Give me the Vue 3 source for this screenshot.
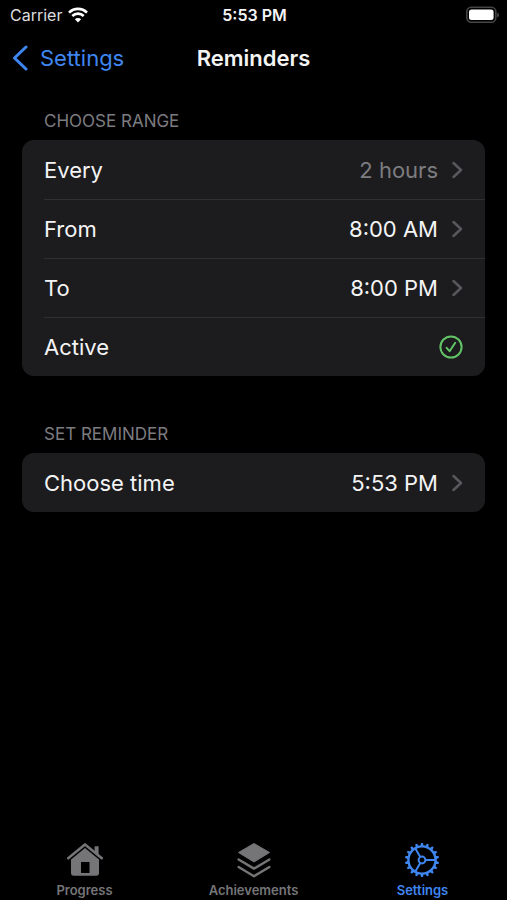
<script setup>
import { ref } from 'vue'

const active = ref(true)
const currentTab = ref('settings')

const range = ref([
  { key: 'every', label: 'Every', value: '2 hours', muted: true },
  { key: 'from', label: 'From', value: '8:00 AM' },
  { key: 'to', label: 'To', value: '8:00 PM' },
])

const tabs = [
  { key: 'progress', label: 'Progress' },
  { key: 'achievements', label: 'Achievements' },
  { key: 'settings', label: 'Settings' },
]

// angles of the teeth around the settings gear
const teeth = Array.from({ length: 18 }, (_, i) => i * 20 + 10)
</script>

<template>
  <div class="screen">
    <div class="status">
      <div class="carrier">
        <span>Carrier</span>
        <svg width="20" height="16" viewBox="0 0 20 16" fill="none" stroke="#fff" stroke-width="2.6">
          <path d="M1 5.6a12.7 12.7 0 0 1 18 0" />
          <path d="M4.3 9a8.1 8.1 0 0 1 11.4 0" />
          <path d="M10 15.4l-3.1-3.2a4.4 4.4 0 0 1 6.2 0z" fill="#fff" stroke="none" />
        </svg>
      </div>
      <span class="clock">5:53 PM</span>
      <svg class="battery" width="34" height="18" viewBox="0 0 34 18">
        <rect x="1.8" y="1.3" width="29" height="15" rx="4.5" fill="none" stroke="#454547" stroke-width="1.6" />
        <rect x="4" y="3.5" width="24.6" height="10.6" rx="2.5" fill="#fff" />
        <path d="M32.2 6.5q1.8.8 1.8 2.5t-1.8 2.5z" fill="#4b4b4d" />
      </svg>
    </div>

    <header class="navbar">
      <a class="back" href="#settings">
        <svg width="16" height="26" viewBox="0 0 16 26" fill="none" stroke="currentColor" stroke-width="3" stroke-linecap="round" stroke-linejoin="round">
          <path d="M14 2L2.5 13L14 24" />
        </svg>
        <span>Settings</span>
      </a>
      <h1 class="title">Reminders</h1>
    </header>

    <main class="content">
      <section>
        <h2 class="heading">CHOOSE RANGE</h2>
        <div class="group">
          <button v-for="r in range" :key="r.key" type="button" class="row">
            <span class="line">
              <span>{{ r.label }}</span>
              <span class="value" :class="{ muted: r.muted }">{{ r.value }}</span>
              <svg class="chevron" width="11" height="18" viewBox="0 0 11 18">
                <path d="M1.5 2L9 9L1.5 16" />
              </svg>
            </span>
          </button>
          <label class="row" for="active">
            <span class="line">
              <span>Active</span>
              <span class="check">
                <input id="active" v-model="active" type="checkbox" />
                <svg width="24" height="24" viewBox="0 0 24 24" fill="none" stroke="#62c466" stroke-width="2">
                  <circle cx="12" cy="12" r="10.6" />
                  <path v-if="active" d="M7.6 12.8l3 3.4l5.6-8.4" stroke-linecap="round" stroke-linejoin="round" />
                </svg>
              </span>
            </span>
          </label>
        </div>
      </section>

      <section>
        <h2 class="heading">SET REMINDER</h2>
        <div class="group">
          <button type="button" class="row">
            <span class="line">
              <span>Choose time</span>
              <span class="value">5:53 PM</span>
              <svg class="chevron" width="11" height="18" viewBox="0 0 11 18">
                <path d="M1.5 2L9 9L1.5 16" />
              </svg>
            </span>
          </button>
        </div>
      </section>
    </main>

    <nav class="tabbar">
      <a
        v-for="t in tabs"
        :key="t.key"
        class="tab"
        :class="{ current: currentTab === t.key }"
        :href="'#' + t.key"
        @click="currentTab = t.key"
      >
        <svg v-if="t.key === 'progress'" width="38" height="36" viewBox="0 0 38 36">
          <path d="M2.2 16.2L19 2.4L35.8 16.2" fill="none" stroke="currentColor" stroke-width="2.6" stroke-linecap="round" stroke-linejoin="round" />
          <path d="M28.6 4.2h4v10l-4-3.4z" fill="currentColor" />
          <path d="M19 6L33 17.4V31q0 2.8-2.8 2.8H7.8Q5 33.800 5 31V17.400zM15 20V31H23.500V20z" fill="currentColor" fill-rule="evenodd" />
        </svg>
        <svg v-else-if="t.key === 'achievements'" width="38" height="36" viewBox="0 0 38 36">
          <path d="M19 1.5L34.5 10.500L19 20L3.500 10.500z" fill="currentColor" stroke="currentColor" stroke-linejoin="round" />
          <path d="M3.600 17.500L19 26.600L34.400 17.500M3.600 25L19 34.200L34.400 25" fill="none" stroke="currentColor" stroke-width="2.400" stroke-linecap="round" stroke-linejoin="round" />
        </svg>
        <svg v-else width="38" height="36" viewBox="0 0 38 36" fill="none" stroke="currentColor" stroke-width="2">
          <circle cx="18" cy="18" r="13.600" stroke-width="2.400" />
          <circle cx="18" cy="18" r="3.400" />
          <path d="M21.400 18H31.500M16.300 15.100L11.200 6.300M16.300 20.900L11.200 29.700" />
          <path v-for="a in teeth" :key="a" d="M31 16.300L35 17V19L31 19.700z" fill="currentColor" stroke="none" :transform="`rotate(${a} 18 18)`" />
        </svg>
        <span>{{ t.label }}</span>
      </a>
    </nav>
  </div>
</template>

<style>
body {
  background: #000;
}
</style>

<style scoped>
.screen {
  display: flex;
  flex-direction: column;
  min-height: 100vh;
  background: #000;
  color: #f4f4f5;
  font-family: Inter, 'Liberation Sans', sans-serif;
}
.status {
  display: grid;
  grid-template-columns: 1fr auto 1fr;
  align-items: center;
  height: 30px;
  padding: 0 8px 0 10px;
  font-size: 16px;
}
.carrier {
  display: flex;
  align-items: center;
  gap: 6px;
  color: #dcdcde;
}
.clock { font-weight: 600; }
.battery { justify-self: end; }
.navbar {
  display: grid;
  grid-template-columns: 1fr auto 1fr;
  align-items: center;
  height: 56px;
  padding: 0 12px;
}
.back {
  display: flex;
  align-items: center;
  gap: 12px;
  color: #3f86f0;
  font-size: 22px;
  text-decoration: none;
}
.title {
  margin: 0;
  font-size: 22px;
  font-weight: 600;
}
.content {
  flex: 1;
  padding: 24px 22px;
}
.heading {
  margin: 0;
  padding: 0 22px 8px;
  color: #7c7c80;
  font-size: 17px;
  font-weight: 400;
  line-height: 22px;
}
section + section { margin-top: 47px; }
.group {
  overflow: hidden;
  border-radius: 12px;
  background: #1c1c1e;
}
.row {
  display: block;
  box-sizing: border-box;
  width: 100%;
  padding: 0 0 0 22px;
  border: 0;
  background: none;
  color: inherit;
  font: inherit;
  font-size: 22px;
  text-align: left;
  cursor: pointer;
}
.line {
  display: flex;
  align-items: center;
  box-sizing: border-box;
  height: 59px;
  padding-right: 22px;
}
.row + .row .line { border-top: 1px solid #303033; }
.value { margin-left: auto; }
.muted { color: #7c7c80; }
.chevron {
  margin-left: 14px;
  fill: none;
  stroke: #58585c;
  stroke-width: 2.5;
  stroke-linecap: round;
  stroke-linejoin: round;
}
.check {
  position: relative;
  display: flex;
  margin-left: auto;
}
.check input {
  position: absolute;
  inset: 0;
  width: 100%;
  height: 100%;
  margin: 0;
  opacity: 0;
  cursor: pointer;
}
.tabbar {
  display: grid;
  grid-template-columns: repeat(3, 1fr);
}
.tab {
  display: flex;
  flex-direction: column;
  align-items: center;
  gap: 4px;
  padding-bottom: 2px;
  color: #757578;
  font-size: 13px;
  font-weight: 600;
  line-height: 16px;
  text-decoration: none;
}
.tab.current { color: #3f86f0; }
</style>
